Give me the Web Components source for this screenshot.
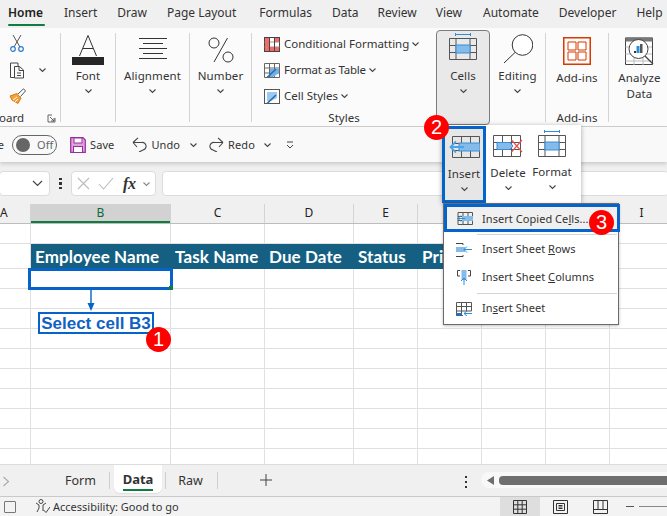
<!DOCTYPE html>
<html lang="en"><head><meta charset="utf-8"><title>Excel</title>
<style>
html,body{margin:0;padding:0;background:#fff}
body{width:667px;height:516px;overflow:hidden;font-family:"Noto Sans","Open Sans",sans-serif;font-size:12px;color:#262626}
</style></head><body>
<x-app>
  <x-tabs slot="top"></x-tabs>
  <x-ribbon slot="top"></x-ribbon>
  <x-qat slot="top"></x-qat>
  <x-formula slot="top"></x-formula>
  <x-sheet slot="top"></x-sheet>
  <x-sheet-tabs slot="top"></x-sheet-tabs>
  <x-status slot="top"></x-status>
  <x-cells-popup></x-cells-popup>
  <x-menu></x-menu>
  <x-badge style="left:424px;top:115px">2</x-badge>
  <x-badge style="left:589px;top:210px">3</x-badge>
  <x-badge style="left:146px;top:327px">1</x-badge>
</x-app>
<script>
const chev=(c='#444',w=9)=>`<svg width="${w}" height="6" viewBox="0 0 9 6"><path d="M1.500 1.500 4.500 4.500 7.500 1.500" fill="none" stroke="${c}" stroke-width="1.100"/></svg>`;
function def(name,css,html,init){
  customElements.define(name,class extends HTMLElement{
    constructor(){super();const r=this.attachShadow({mode:'open'});
      r.innerHTML=`<style>${css}</style>${html}`;}
    connectedCallback(){ if(init&&!this._i){this._i=1;init(this,this.shadowRoot);} }
  });
}

def('x-app',`:host{display:block;position:relative;width:667px;height:516px;overflow:hidden}
.col{display:flex;flex-direction:column;height:516px}`,`<div class="col"><slot name="top"></slot></div><slot></slot>`);

def('x-tabs',`:host{display:flex;height:28px;flex:none;background:#f0f0f0;box-sizing:border-box;padding:0 0 0 8px;font:12px/26px "Noto Sans",sans-serif;color:#333;white-space:nowrap}
span{flex:none;margin-left:var(--m)}
.on{font-weight:600;color:#222;}
.on i{display:block;height:2px;background:#107c41;margin-top:-2px;border-radius:1px}`,
`<span class="on" style="width:37px">Home<i></i></span>
<span style="--m:19px">Insert</span><span style="--m:20px">Draw</span><span style="--m:20px">Page Layout</span><span style="--m:23px">Formulas</span><span style="--m:20px">Data</span><span style="--m:19px">Review</span><span style="--m:19px">View</span><span style="--m:21px">Automate</span><span style="--m:20px">Developer</span><span style="--m:20px">Help</span>`);

def('x-sep',`:host{display:block;width:1px;flex:none;background:#d4d4d4;margin:5px 0 4px}`,``);

def('x-big',`:host{display:flex;flex-direction:column;align-items:center;box-sizing:border-box;width:var(--w,54px);font:11.500px/16px "Noto Sans",sans-serif;color:#333;flex:none}
.ic{height:var(--ih,34px);margin-top:var(--it,5px);display:flex;align-items:flex-start;justify-content:center}
.lb{text-align:center;white-space:nowrap;letter-spacing:.1px}
.ch{height:13px;display:flex;align-items:center;justify-content:center}
.ch ::slotted(span){display:flex}`,
`<div class="ic"><slot name="icon"></slot></div><div class="lb"><slot></slot></div><div class="ch"><slot name="chev"></slot></div>`);

def('x-styleline',`:host{display:flex;align-items:center;gap:4px;height:26px;font:11.500px/16px "Noto Sans",sans-serif;color:#333;white-space:nowrap}
.t{flex:none;margin-right:-2px}`,`<slot name="i"></slot><span class="t"><slot></slot></span><slot name="c"></slot>`);

def('x-ribbon',`:host{display:flex;height:99px;flex:none;background:#fbfbfb;border-bottom:1px solid #d0d0d0;box-sizing:border-box;font:11.500px/16px "Noto Sans",sans-serif;color:#333;position:relative;z-index:1}
.g{display:flex;flex:none;flex-direction:column}
.clip{width:60px}
.clip .r{display:flex;align-items:center;height:26px;padding-left:9px}
.clip .rows{padding-top:3px;flex:1}
.glabel{display:flex;justify-content:center;height:16px;line-height:16px;white-space:nowrap;flex:none}
.clabel{display:flex;justify-content:space-between;align-items:center;padding-right:4px;height:16px;flex:none}
.clabel b{font-weight:400;display:flex;justify-content:flex-end;width:24px;white-space:nowrap}
.styles{width:184px}
.styles .rows{padding:3px 0 0 12px;flex:1}
.cells{height:95px;margin-top:2px;background:#e9e9e9;border:1px solid #7d7d7d;border-radius:4px}
.fill{flex:1}
.an{padding-left:3px}`,
`<div class="g clip"><div class="rows">
  <div class="r"><svg width="16" height="18" viewBox="0 0 16 18"><path d="M4 0 11 12M12 0 5 12" stroke="#555" fill="none"/><circle cx="4" cy="14" r="2.300" fill="none" stroke="#2b7cd3" stroke-width="1.200"/><circle cx="12" cy="14" r="2.300" fill="none" stroke="#2b7cd3" stroke-width="1.200"/></svg></div>
  <div class="r"><svg width="16" height="17" viewBox="0 0 16 17"><path d="M5 15.500H1.500V1H9V4.500M5.500 4.500H10.500L14.500 8V16H5.500Z M10 4.500V8.500H14.500M8 11H12M8 13.500H12" fill="none" stroke="#444"/></svg><span style="margin-left:13px;display:flex">${chev()}</span></div>
  <div class="r"><svg width="17" height="16" viewBox="0 0 17 16"><path d="M1 8 8 5.500 12 10 9 15.500 3 12Z" fill="#f2a23c" stroke="#d87a12"/><path d="M4 12 8 9M6 14 9 11" stroke="#fff"/><path d="M9 6 14.500 .8 16.500 3 11.500 8.500" fill="#fff" stroke="#555"/></svg></div>
 </div>
 <div class="clabel"><b>Clipboard</b><svg width="9" height="9" viewBox="0 0 9 9"><path d="M8 4V8H1V1H5M3 3 7 7M7 4V7H4" fill="none" stroke="#555" stroke-width=".9"/></svg></div>
</div><x-sep></x-sep>
<x-big style="--w:54px;--it:7px;--ih:33px"><svg slot="icon" width="32" height="30" viewBox="0 0 32 30"><path d="M7.500 21 16 .5 24.500 21M11 13.500H21" fill="none" stroke="#333"/><rect y="22" width="32" height="8" fill="#262626"/></svg>Font<span slot="chev">${chev()}</span></x-big><x-sep></x-sep>
<x-big style="--w:73px;--it:10px;--ih:30px"><svg slot="icon" width="28" height="21" viewBox="0 0 28 21"><path d="M0 .5H28M4 5.500H24M0 10.500H28M4 15.500H24M0 20.500H28" stroke="#333"/></svg>Alignment<span slot="chev">${chev()}</span></x-big><x-sep></x-sep>
<x-big style="--w:61px;--it:9px;--ih:31px"><svg slot="icon" width="26" height="26" viewBox="0 0 26 26"><path d="M19.500 1 6 25" stroke="#333"/><circle cx="6" cy="6" r="5" fill="none" stroke="#333"/><circle cx="20" cy="20" r="5" fill="none" stroke="#333"/></svg>Number<span slot="chev">${chev()}</span></x-big><x-sep></x-sep>
<div class="g styles"><div class="rows">
  <x-styleline><svg slot="i" width="16" height="15" viewBox="0 0 16 15"><rect x=".5" y=".5" width="15" height="14" fill="#fff" stroke="#444"/><path d="M.5 5H15.500M.5 10H15.500" stroke="#999"/><rect x="1" y="1" width="4" height="13" fill="#f26a6a"/><rect x="11" y="1" width="4" height="4" fill="#f26a6a"/><rect x="5" y="10" width="10" height="4" fill="#f26a6a"/><path d="M5.500 .5V14.500M10.500 .5V14.500" stroke="#444"/></svg>Conditional Formatting<span slot="c" style="display:flex">${chev()}</span></x-styleline>
  <x-styleline style="letter-spacing:-.25px"><svg slot="i" width="16" height="15" viewBox="0 0 16 15"><path d="M.5.500H15.500V14.500H.5ZM.5 5H15.500M.5 10H15.500M5.500.5V14.500M10.500.5V14.500" fill="#fff" stroke="#666"/><path d="M6 6H15V10L9 14H6Z" fill="#6fb2ea"/><path d="M3 14.500 12 6" stroke="#2b6cb0" stroke-width="1.600"/></svg>Format as Table<span slot="c" style="display:flex">${chev()}</span></x-styleline>
  <x-styleline><svg slot="i" width="16" height="15" viewBox="0 0 16 15"><rect x=".5" y=".5" width="15" height="14" fill="#fff" stroke="#555"/><path d="M3 3H13V9L7 12H3Z" fill="#9cc9ef"/><path d="M3 14.500 12 6" stroke="#2b6cb0" stroke-width="1.600"/></svg>Cell Styles<span slot="c" style="display:flex">${chev()}</span></x-styleline>
 </div><div class="glabel">Styles</div></div>
<x-big class="cells" style="--w:54px;--it:2px;--ih:35px"><svg slot="icon" width="28" height="27" viewBox="0 0 28 27"><path d="M6.500 0V3M21.500 0V3M6.500 1.500H21.500" stroke="#2b8fd8"/><path d="M.5 5.500H27.500V26.500H.5ZM.5 12.500H27.500M.5 19.500H27.500M7 5.500V26.500M21 5.500V26.500" fill="none" stroke="#555"/><rect x="7" y="12" width="14" height="8" fill="#85bbea" stroke="#3b8ed6"/></svg>Cells<span slot="chev">${chev()}</span></x-big>
<x-big style="--w:55px;--it:6px;--ih:34px"><svg slot="icon" width="30" height="30" viewBox="0 0 30 30"><circle cx="19.500" cy="11" r="10.300" fill="#fff" stroke="#333"/><path d="M12 18.500 1 29" stroke="#333"/></svg>Editing<span slot="chev">${chev()}</span></x-big><x-sep></x-sep>
<div class="g"><x-big style="--w:62px;--it:9px;--ih:33px"><svg slot="icon" width="28" height="28" viewBox="0 0 28 28"><path d="M.75.75H27.250V27.250H.75Z" fill="none" stroke="#d83b01" stroke-width="1.500"/><path d="M5 5H13V13H5ZM15 5H23V13H15ZM5 15H13V23H5ZM15 15H23V23H15Z" fill="#fff" stroke="#d83b01"/></svg>Add-ins</x-big><div class="fill"></div><div class="glabel">Add-ins</div></div><x-sep></x-sep>
<x-big style="--w:58px;--it:9px;--ih:33px" class="an"><svg slot="icon" width="29" height="29" viewBox="0 0 29 29"><path d="M.5 1H27.500V27.500H.5Z" fill="#fff" stroke="#444"/><rect x=".5" y=".5" width="27" height="4" fill="#777"/><path d="M.5 10H27M.5 17H27M.5 24H27M9 5V28M18 5V28" stroke="#bbb"/><circle cx="13.500" cy="12" r="9.500" fill="#fff" stroke="#444"/><path d="M9 14H11V16H9Z" fill="#333"/><rect x="11.500" y="9" width="3" height="7" fill="#2b8fd8"/><rect x="15" y="7" width="2.500" height="9" fill="#555"/><path d="M20 19 28 27" stroke="#444" stroke-width="1.300"/></svg><div style="line-height:16px;text-align:center">Analyze<br>Data</div></x-big>`);

def('x-qat',`:host{display:flex;align-items:center;height:35px;flex:none;background:#f9f9f9;box-shadow:0 2px 4px rgba(0,0,0,.16);position:relative;z-index:1;font:11px/16px "Noto Sans",sans-serif;letter-spacing:.1px;color:#333;white-space:nowrap;box-sizing:border-box}
.e{width:4px;overflow:hidden;direction:rtl;flex:none}
.tg{display:flex;align-items:center;box-sizing:border-box;width:45px;height:20px;margin-left:8px;border:1px solid #666;border-radius:10px;padding-left:3px;gap:7px;color:#666;flex:none}
.tg i{width:14px;height:14px;border-radius:50%;background:#666;flex:none}
.it{display:flex;align-items:center;flex:none}`,
`<span class="e">e</span><span class="tg"><i></i>Off</span>
<span class="it" style="margin-left:13px;gap:4px"><svg width="16" height="16" viewBox="0 0 16 16"><path d="M.7.700H13L15.300 3V15.300H.7Z" fill="#dfa3dc" stroke="#9b2d9f" stroke-width="1.200"/><rect x="4" y="1" width="8" height="5" fill="#fff" stroke="#9b2d9f"/><rect x="3.500" y="9.500" width="9" height="6" fill="#fff" stroke="#9b2d9f"/></svg>Save</span>
<span class="it" style="margin-left:18px;gap:4px"><svg width="15" height="15" viewBox="0 0 15 15"><path d="M1 5.500H9.500A3.800 3.800 0 0 1 11 13L7 15M1 5.500 6 .8M1 5.500 5 10" fill="none" stroke="#444" stroke-width="1.100"/></svg>Undo</span>
<span class="it" style="margin-left:9px">${chev()}</span>
<span class="it" style="margin-left:11px;gap:4px"><svg width="15" height="15" viewBox="0 0 15 15"><path d="M14 5.500H5.500A3.800 3.800 0 0 0 4 13L8 15M14 5.500 9 .8M14 5.500 10 10" fill="none" stroke="#444" stroke-width="1.100"/></svg>Redo</span>
<span class="it" style="margin-left:8px">${chev()}</span>
<span class="it" style="margin-left:14px"><svg width="8" height="8" viewBox="0 0 8 8"><path d="M1 1H7M1 4 4 7 7 4" fill="none" stroke="#444"/></svg></span>`);

def('x-formula',`:host{display:flex;align-items:center;height:42px;flex:none;background:#f0f0f0;box-sizing:border-box;padding-top:1px}
.b{background:#fff;border:1px solid #dcdcdc;border-radius:4px;height:25px;box-sizing:border-box;display:flex;align-items:center;flex:none}
.n{width:51px;margin-left:-1px;justify-content:flex-end;padding-right:6px}
.d{width:21px;display:flex;flex-direction:column;align-items:center;gap:2px;flex:none}
.d i{width:2.500px;height:2.500px;background:#333;display:block}
.fx{width:85px;gap:8px;padding-left:5px}
.fx em{font:italic 700 16px "Liberation Serif",serif;color:#333;margin-left:1px;letter-spacing:-.3px}
.inp{margin-left:6px;flex:1;margin-right:-2px}`,
`<div class="b n"><svg width="11" height="7" viewBox="0 0 11 7"><path d="M1 1 5.500 5.500 10 1" fill="none" stroke="#444" stroke-width="1.200"/></svg></div>
<div class="d"><i></i><i></i><i></i></div>
<div class="b fx"><svg width="13" height="13" viewBox="0 0 13 13"><path d="M1 1 12 12M12 1 1 12" stroke="#bbb" stroke-width="1.100"/></svg><svg width="16" height="13" viewBox="0 0 16 13"><path d="M1 7 5.500 12 15 1" fill="none" stroke="#bbb" stroke-width="1.100"/></svg><em>fx</em><span style="display:flex;margin-left:-3px">${chev('#888',11)}</span></div>
<div class="b inp"></div>`);

def('x-sheet',`:host{display:block;position:relative;flex:1;min-height:0;overflow:hidden;background:#fff}
.cols{display:grid;grid-template-columns:var(--t);height:20px;background:#f0f0f0;border-bottom:1px solid #bdbdbd;box-sizing:border-box;font:12px/18px "Noto Sans",sans-serif;color:#222}
.cols div{text-align:center;border-right:1px solid #d4d4d4;box-sizing:border-box}
.cols .first{text-align:right;overflow:hidden;padding-right:26px}
.cols .on{background:#d2d2d2;color:#0e6a3c;box-shadow:inset 0 -2px 0 #107c41;border-right-color:#d2d2d2}
.g{display:grid;grid-template-columns:var(--t);grid-template-rows:20px 25px repeat(10,20px)}
.g div{border-right:1px solid #e0e0e0;border-bottom:1px solid #e0e0e0;box-sizing:border-box;white-space:nowrap;overflow:hidden}
.g .h{background:#156082;color:#fff;font:700 17px/26px "Lato",sans-serif;letter-spacing:.1px;padding-left:4px;border-color:#156082}
.sel{position:absolute;left:28px;top:64px;width:145px;height:22px;box-sizing:border-box;border:3px solid #0563c9}
.sel i{position:absolute;right:-3px;bottom:-3px;width:4px;height:4px;background:#107c41}
.arrow{position:absolute;left:86px;top:86px}
.lab{position:absolute;left:38px;top:108px;width:116px;height:22px;box-sizing:border-box;border:2px solid #0563c9;background:#fff;color:#0f62c4;font:700 17px/19px "Liberation Sans",sans-serif;text-align:center;white-space:nowrap}`,
`<div style="--t:31px 140px 94px 89px 64px 64px 64px 64px 64px 64px"><div class="cols" id="c"></div><div class="g" id="g"></div></div>
<div class="sel"><i></i></div>
<svg class="arrow" width="10" height="22" viewBox="0 0 10 22"><path d="M5 0V16" stroke="#0563c9" stroke-width="1.400"/><path d="M1.500 13H8.500L5 21Z" fill="#0563c9"/></svg>
<div class="lab">Select cell B3</div>`,
(h,r)=>{
  const cols=['A','B','C','D','E','F','G','H','I','J'];
  r.getElementById('c').innerHTML=cols.map((c,i)=>`<div class="${i==0?'first':''}${i==1?'on':''}">${c}</div>`).join('');
  const heads=['Employee Name','Task Name','Due Date','Status','Priority'];
  let s='';
  for(let y=0;y<12;y++)for(let x=0;x<10;x++){
    s+=(y==1&&x>=1&&x<=5)?`<div class="h">${heads[x-1]}</div>`:`<div></div>`;
  }
  r.getElementById('g').innerHTML=s;
});

def('x-sheet-tabs',`:host{display:flex;align-items:flex-start;height:32px;flex:none;background:#f0f0f0;border-top:1px solid #dcdcdc;box-sizing:border-box;font:12.500px/16px "Noto Sans",sans-serif;color:#333;white-space:nowrap}
.c{width:57px;flex:none;padding:11px 0 0 2px;box-sizing:border-box;display:flex}
.t{width:49px;text-align:center;padding-top:8px;flex:none;box-sizing:border-box;height:26px}
.t.f{margin-right:3px;padding-right:2px;width:49px}
.s{width:1px;height:17px;background:#cfcfcf;margin-top:7px;flex:none}
.on{width:48px;height:28px;margin:0 3px 0 4px;background:#fff;border-radius:0 0 6px 6px;font-weight:700;font-size:13px;padding-top:6px;box-shadow:0 1px 1px rgba(0,0,0,.08);display:flex;flex-direction:column;align-items:center;flex:none;box-sizing:border-box}
.on i{display:block;width:30px;height:2px;background:#107c41;margin-top:2px}
.plus{margin-left:42px;margin-top:9px;display:flex;flex:none}
.dots{margin-left:193px;display:flex;flex-direction:column;gap:3px;margin-top:11px;flex:none}
.dots i{display:block;width:2px;height:2px;background:#333}
.track{margin-left:14px;flex:1;height:16px;margin-top:7px;background:#f8f8f8;border-radius:8px 0 0 8px;display:flex;align-items:center;padding-left:6px;gap:5px;margin-right:-2px}
.th{flex:1;height:9px;background:#6e6e6e;border-radius:4px 0 0 4px}`,
`<div class="c"><svg width="8" height="11" viewBox="0 0 8 11"><path d="M1.500 1 6.500 5.500 1.500 10" fill="none" stroke="#aaa" stroke-width="1.100"/></svg></div>
<div class="t f">Form</div><div class="s"></div>
<div class="on">Data<i></i></div><div class="s"></div>
<div class="t" style="width:51px;padding-right:2px">Raw</div><div class="s"></div>
<div class="plus"><svg width="12" height="12" viewBox="0 0 12 12"><path d="M6 0V12M0 6H12" stroke="#444"/></svg></div>
<div class="dots"><i></i><i></i><i></i></div>
<div class="track"><svg width="7" height="9" viewBox="0 0 7 9"><path d="M7 0V9L0 4.500Z" fill="#6e6e6e"/></svg><div class="th"></div></div>`);

def('x-status',`:host{display:flex;align-items:center;height:20px;flex:none;background:#f3f3f3;border-top:1px solid #c9c9c9;box-sizing:border-box;font:11px/14px "Noto Sans",sans-serif;color:#333;white-space:nowrap}
.cb{width:12px;height:12px;margin-left:4px;border:1px solid #777;box-sizing:border-box;border-radius:1px;flex:none}
.ai{margin-left:19px;flex:none;display:flex}
.tx{margin-left:3px;flex:none;width:447px;box-sizing:border-box}
.v{height:19px;width:40px;display:flex;align-items:center;justify-content:center;flex:none}
.v.on{background:#dedede}
.z{margin-left:6px;display:flex;flex:1;align-items:center;gap:5px}
.z i{display:block;height:1px;background:#555}`,
`<div class="cb"></div><div class="ai"><svg width="15" height="15" viewBox="0 0 15 15"><circle cx="6" cy="2.500" r="2" fill="none" stroke="#444"/><path d="M1 4 4 6V9L2 13M11 4 8 6V9L8 12" fill="none" stroke="#444"/><path d="M8.500 11 11 13.500 15 8" fill="none" stroke="#444"/></svg></div>
<div class="tx">Accessibility: Good to go</div>
<div class="v on"><svg width="14" height="14" viewBox="0 0 14 14"><path d="M.5.500H13.500V13.500H.5ZM.5 4.800H13.500M.5 9.200H13.500M4.800.5V13.500M9.200.5V13.500" fill="none" stroke="#333"/></svg></div>
<div class="v"><svg width="15" height="14" viewBox="0 0 15 14"><path d="M.5.500H14.500V13.500H.5ZM3.500 3.500H11.500V10.500H3.500ZM5.500 5.500H9.500M5.500 7H9.500M5.500 8.500H9.500" fill="none" stroke="#333"/></svg></div>
<div class="v"><svg width="15" height="14" viewBox="0 0 15 14"><path d="M.5.500H14.500V13.500H.5ZM.5 9.500H14.500M5 .5V9.500M10 .5V9.500" fill="none" stroke="#333"/></svg></div>
<div class="z"><i style="width:8px"></i><i style="flex:1;background:#888"></i></div>`);

def('x-cells-popup',`:host{display:flex;position:absolute;left:442px;top:125px;width:139px;height:78px;background:#fff;box-shadow:0 1px 5px rgba(0,0,0,.35);box-sizing:border-box;z-index:3}
.i{border:3px solid #0563c9;background:#e6e6e6;--w:44px;height:77px;margin-top:1px;--it:6px;--ih:31px}
.d{--w:44px;--it:10px;--ih:30px}
.f{--w:44px;--it:5px;--ih:34px}`,
`<x-big class="i"><svg slot="icon" width="31" height="23" viewBox="0 0 31 23"><path d="M3.500 1.500H30.500V22.500H3.500ZM3.500 8.500H30.500M3.500 15.500H30.500M12.500 1.500V22.500M21.500 1.500V22.500" fill="none" stroke="#555"/><rect x="10" y="8" width="21" height="8" fill="#85bbea" stroke="#3b8ed6"/><path d="M15 12H2M7 6.500 1.500 12 7 17.500" fill="none" stroke="#4aa5e6" stroke-width="1.800"/></svg>Insert<span slot="chev">${chev()}</span></x-big>
<x-big class="d"><svg slot="icon" width="30" height="22" viewBox="0 0 30 22"><path d="M.5.500H27.500V21.500H.5ZM.5 7.500H27.500M.5 14.500H27.500M9.500.5V21.500M18.500.5V21.500" fill="none" stroke="#555"/><path d="M4 7.500H17L20 11 17 14.500H4Z" fill="#85bbea" stroke="#3b8ed6"/><path d="M18.500 5 29 17M29 5 18.500 17" stroke="#e8524f" stroke-width="1.200"/></svg>Delete<span slot="chev">${chev()}</span></x-big>
<x-big class="f"><svg slot="icon" width="28" height="27" viewBox="0 0 28 27"><path d="M6.500 0V3M21.500 0V3M6.500 1.500H21.500" stroke="#2b8fd8"/><path d="M.5 5.500H27.500V26.500H.5ZM.5 12.500H27.500M.5 19.500H27.500M7 5.500V26.500M21 5.500V26.500" fill="none" stroke="#555"/><rect x="7" y="12" width="14" height="8" fill="#85bbea" stroke="#3b8ed6"/></svg>Format<span slot="chev">${chev()}</span></x-big>`);

def('x-mi',`:host{display:flex;align-items:center;height:var(--h,28px);box-sizing:border-box;font:11px/16px "Noto Sans",sans-serif;letter-spacing:.05px;color:#333;white-space:nowrap}
.ic{width:var(--iw,38px);flex:none;display:flex;justify-content:center;padding:var(--ipt,2px) 0 0 var(--ip,2px);box-sizing:border-box}`,`<div class="ic"><slot name="icon"></slot></div><span><slot></slot></span>`);

def('x-menu',`:host{display:block;position:absolute;left:443px;top:203px;width:176px;height:122px;background:#fff;border:1px solid #6b6b6b;box-sizing:border-box;z-index:4;box-shadow:0 1px 3px rgba(0,0,0,.25)}
.hl{border:3px solid #0563c9;background:#f0f0f0;margin:0 -2px 0 0;--iw:35px;--ip:0px;--ipt:0px;padding-top:1px}
hr{border:0;height:1px;background:#d4d4d4;margin:2px 1px 0 33px}
u{text-underline-offset:1px}`,
`<x-mi class="hl" style="--h:28px"><svg slot="icon" width="16" height="13" viewBox="0 0 16 13"><path d="M1 .5H15.500V12.500H1ZM1 4.500H15.500M1 8.500H15.500M6 .5V12.500M11 .5V12.500" fill="none" stroke="#555"/><rect x="5" y="4" width="11" height="5" fill="#85bbea"/><path d="M8 6.500H1M4 3.500 1 6.500 4 9.500" fill="none" stroke="#2b8fd8"/></svg>Insert Copied Ce<u>l</u>ls...</x-mi>
<hr>
<x-mi style="--h:27px"><svg slot="icon" width="16" height="14" viewBox="0 0 16 14"><path d="M7 2V.5H0M7 12V13.500H0" stroke="#444" fill="none"/><rect x="0" y="4" width="9" height="5" fill="#85bbea"/><path d="M16 6.500H8M11 3.500 8 6.500 11 9.500" fill="none" stroke="#2b8fd8"/></svg>Insert Sheet <u>R</u>ows</x-mi>
<x-mi style="--h:29px"><svg slot="icon" width="16" height="16" viewBox="0 0 16 16"><path d="M4 .5H1.500V6H4M12 .5H14.500V6H12" stroke="#444" fill="none"/><rect x="5.500" y="0" width="5" height="10" fill="#85bbea"/><path d="M8 15V8M5 11 8 8 11 11" fill="none" stroke="#2b8fd8"/></svg>Insert Sheet <u>C</u>olumns</x-mi>
<hr>
<x-mi style="--h:27px"><svg slot="icon" width="16" height="14" viewBox="0 0 16 14"><path d="M.5.500H15.500V9M.5.500V13.500H7M.5 4.500H15.500M.5 9H15.500M5.500.5V13M10.500.5V9" fill="none" stroke="#555"/><rect x="0" y="11" width="6" height="3" fill="#2b6cb0"/><path d="M16 11.500H8M11 9 8 11.500 11 14" fill="none" stroke="#2b8fd8"/></svg>In<u>s</u>ert Sheet</x-mi>`);

def('x-badge',`:host{display:flex;position:absolute;width:25px;height:25px;border-radius:50%;background:#f00;color:#fff;align-items:center;justify-content:center;font:400 20px/25px "Liberation Sans",sans-serif;z-index:5}`,`<slot></slot>`);
</script>
</body></html>
